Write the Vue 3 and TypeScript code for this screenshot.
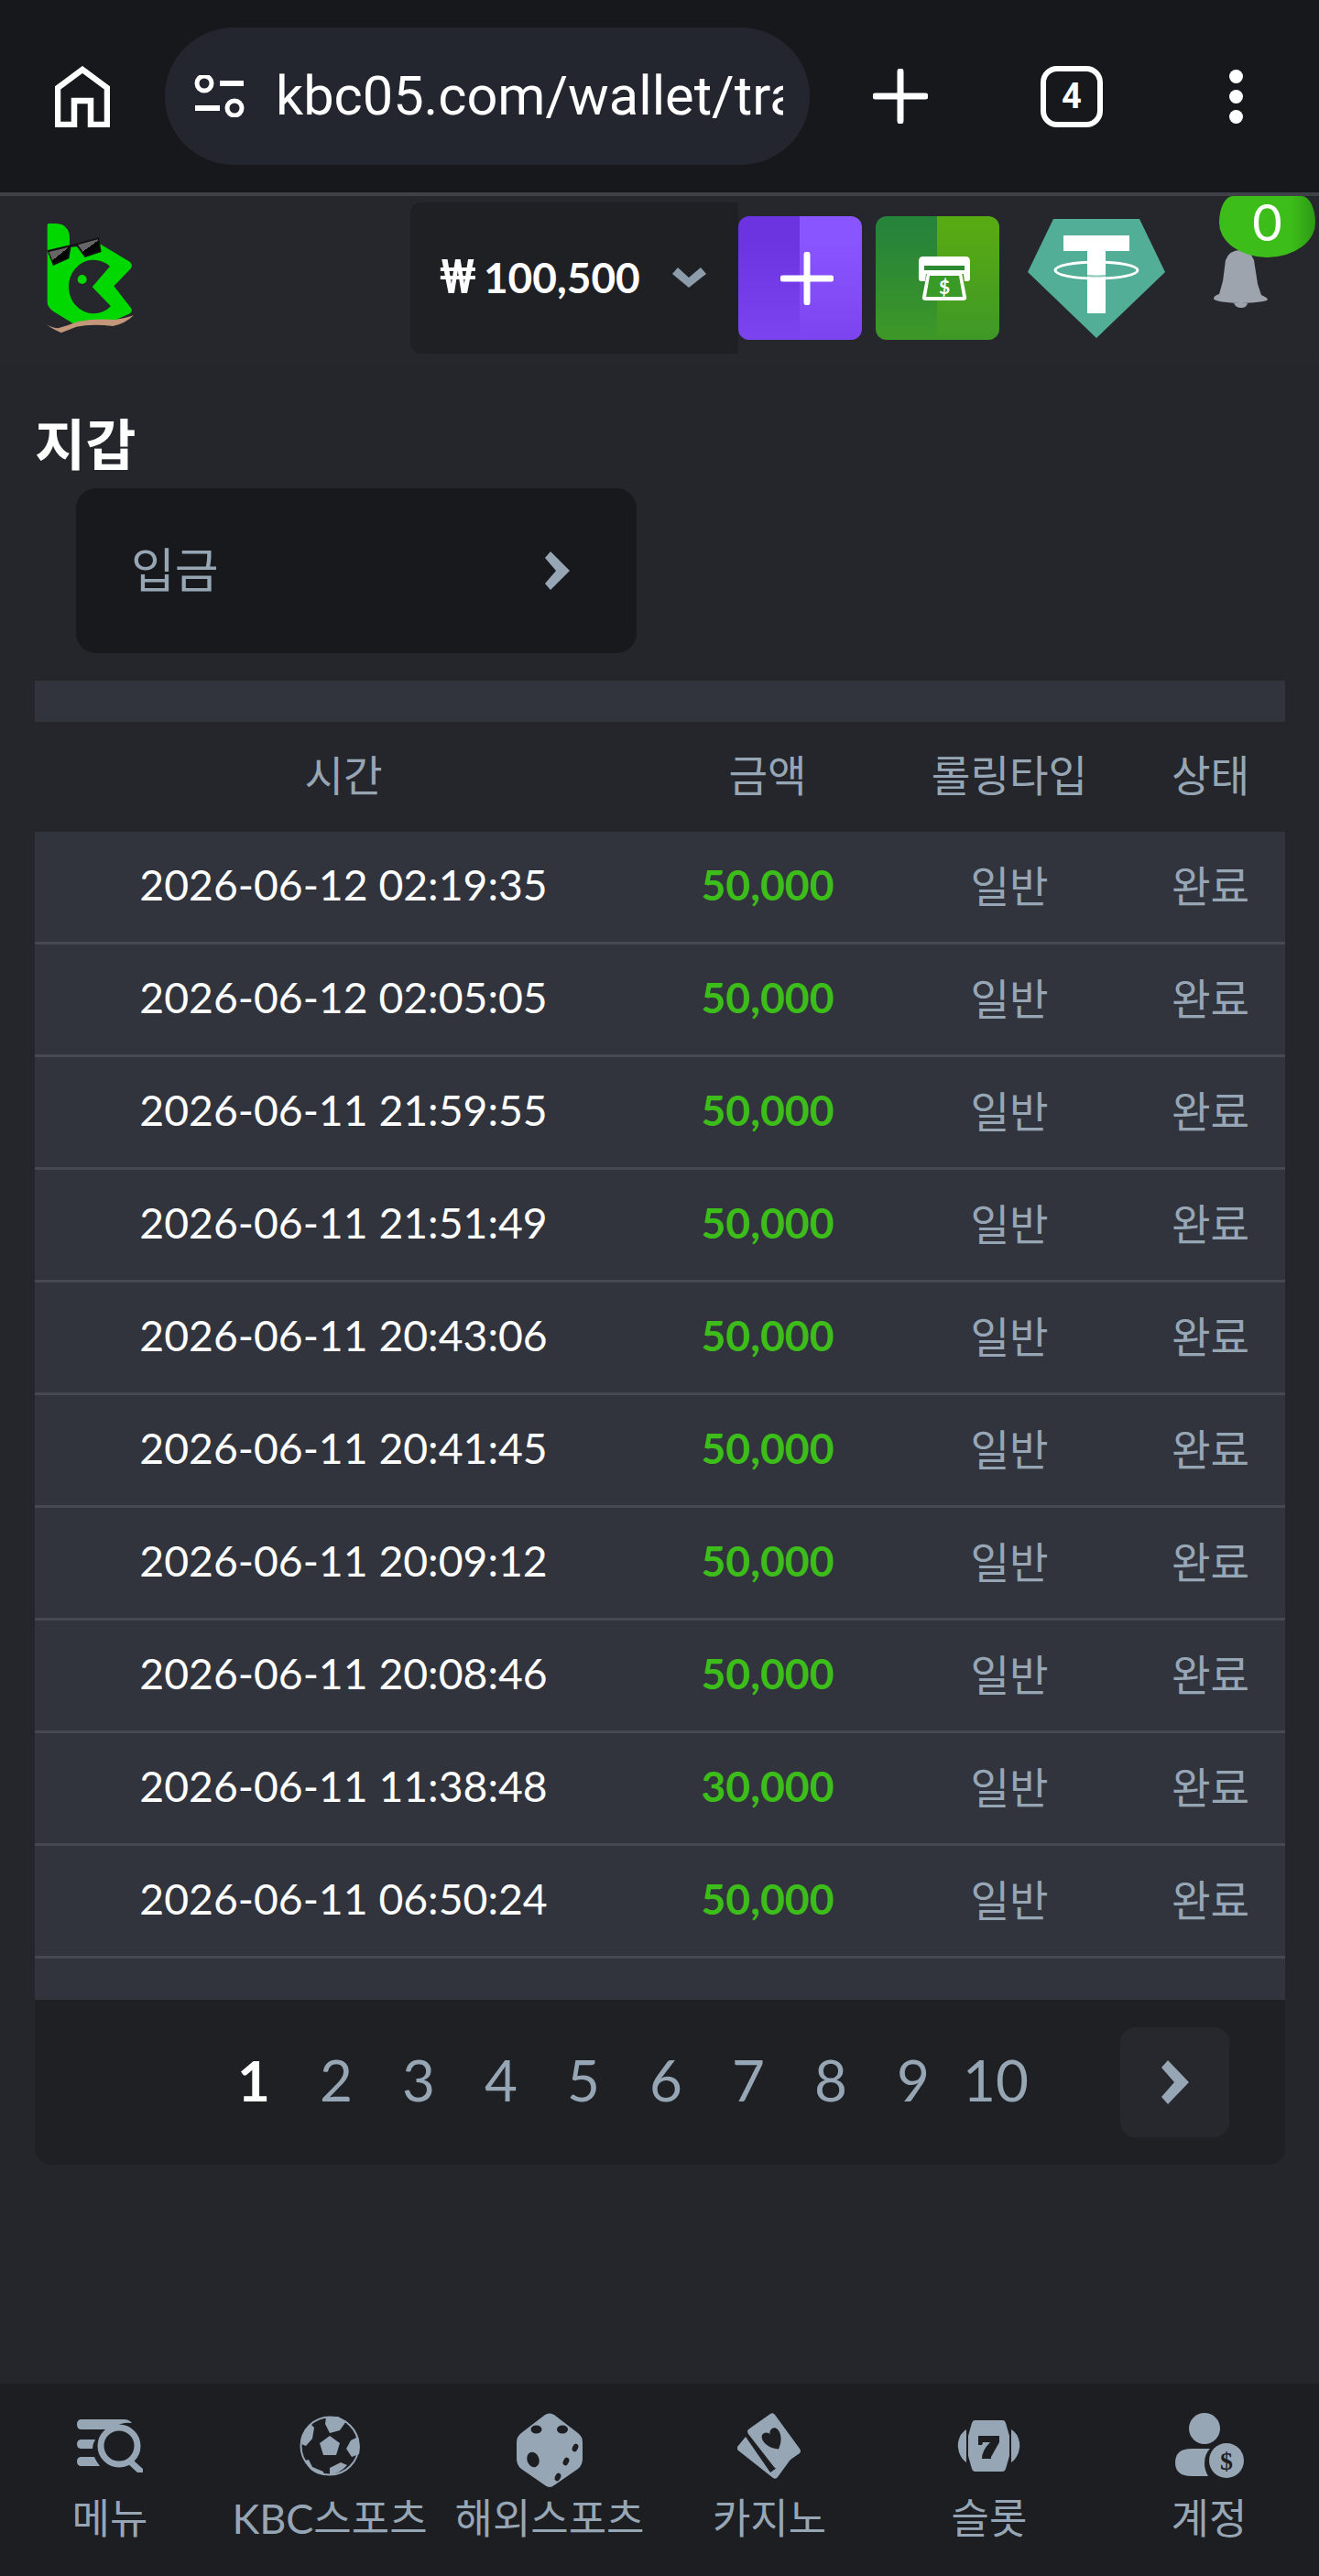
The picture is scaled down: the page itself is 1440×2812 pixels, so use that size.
<script setup lang="ts">
const rows = [
  { time: '2026-06-12 02:19:35', amount: '50,000' },
  { time: '2026-06-12 02:05:05', amount: '50,000' },
  { time: '2026-06-11 21:59:55', amount: '50,000' },
  { time: '2026-06-11 21:51:49', amount: '50,000' },
  { time: '2026-06-11 20:43:06', amount: '50,000' },
  { time: '2026-06-11 20:41:45', amount: '50,000' },
  { time: '2026-06-11 20:09:12', amount: '50,000' },
  { time: '2026-06-11 20:08:46', amount: '50,000' },
  { time: '2026-06-11 11:38:48', amount: '30,000' },
  { time: '2026-06-11 06:50:24', amount: '50,000' },
]
const pages = [1, 2, 3, 4, 5, 6, 7, 8, 9, 10]
</script>

<template>
  <div class="page">
    <div class="browser">
      <svg class="home" viewBox="0 0 60 67" width="60" height="67">
        <path d="M3 64V24L30 4l27 20v40H39V38H21v26Z" fill="none" stroke="#fff" stroke-width="6.500" />
      </svg>
      <div class="url">
        <svg class="tune" viewBox="0 0 56 46" width="56" height="46">
          <circle cx="11" cy="9" r="8" fill="none" stroke="#fff" stroke-width="5" />
          <rect x="28" y="6" width="26" height="6" fill="#fff" />
          <rect x="1" y="33" width="27" height="6" fill="#fff" />
          <circle cx="44" cy="36" r="8" fill="none" stroke="#fff" stroke-width="5" />
        </svg>
        <span class="url-text">kbc05.com/wallet/tra</span>
      </div>
      <svg class="plus" viewBox="0 0 60 60" width="60" height="60">
        <path d="M30 3v54M3 30h54" stroke="#fff" stroke-width="7" stroke-linecap="round" />
      </svg>
      <div class="tabs">4</div>
      <div class="dots"><i></i><i></i><i></i></div>
    </div>

    <header class="top">
      <svg class="logo" viewBox="0 0 390 450" width="130" height="150">
        <defs>
          <linearGradient id="lens" x1="0" y1="0" x2="1" y2="1">
            <stop offset="0.5" stop-color="#666" />
            <stop offset="0.5" stop-color="#050505" />
          </linearGradient>
        </defs>
        <path
          d="M65 62Q65 57 70 57H95Q138 60 138 105V135L240 125 335 182Q347 192 338 205L283 262 340 335Q345 345 335 352L290 372 150 385 85 345Q65 330 65 315Z"
          fill="#00d800"
        />
        <path d="M270 197L212 265 273 328A82 88 0 1 1 270 197Z" fill="#25272c" />
        <circle cx="179" cy="240" r="15" fill="#00d800" />
        <path d="M64 145L140 127 162 122 234 102 242 150 188 168 160 130 143 132 136 172 84 195Z" fill="#111" />
        <path d="M70 150L136 134 130 170 86 187Z" fill="url(#lens)" />
        <path d="M165 127L230 109 236 146 190 161Z" fill="url(#lens)" />
        <path
          d="M62 388Q85 405 110 415 135 405 160 395 210 385 280 393 320 385 348 358 320 368 285 372 220 368 165 378 130 392 100 400 85 400 62 388Z"
          fill="#c3977a"
        />
      </svg>

      <div class="balance">
        <span class="amount-text"><b class="won">₩</b> 100,500</span>
        <svg viewBox="0 0 37 23" width="37" height="23">
          <path d="M0 8l6-7 12 11L31 1l6 7-19 15Z" fill="#8d9cab" />
        </svg>
      </div>

      <button class="action purple">
        <svg viewBox="0 0 58 58" width="58" height="58">
          <path d="M29 3v52M3 29h52" stroke="#fff" stroke-width="7" stroke-linecap="round" />
        </svg>
      </button>

      <button class="action green">
        <svg viewBox="0 0 58 48" width="58" height="48">
          <path d="M6 0h46q5 0 5 5v19q0 3-3 3h-3l-1-8H9l-1 8H4q-3 0-3-3V5q0-5 5-5Z" fill="#fff" />
          <rect x="7" y="10" width="44" height="5" fill="#2d8a30" />
          <path d="M10 18h38l5 26q1 4-4 4H9q-5 0-4-4Z" fill="#fff" />
          <path d="M13 21h32l4 23H9Z" fill="#3a9a27" />
          <text x="29" y="41" class="atm-sign">$</text>
        </svg>
      </button>

      <svg class="tether" viewBox="0 0 150 130" width="150" height="130">
        <path d="M28 0h94l28 58-75 72L0 58Z" fill="#52ae96" />
        <ellipse cx="75" cy="56" rx="45" ry="9" fill="none" stroke="#fff" stroke-width="3" />
        <path d="M39 18h72v17H85v68H65V35H39Z" fill="#fff" />
        <path d="M65 62q10 1 20 0" fill="none" stroke="#8fcbbb" stroke-width="2" />
      </svg>

      <div class="bell-wrap">
        <svg viewBox="0 0 59 63" width="59" height="63">
          <path d="M29 0q11 0 15 11l4 26 4 12q7 3 7 5-2 3-30 4Q1 57 0 53q0-3 6-5l4-14 3-23Q17 0 29 0Z" fill="#9ea4ad" />
          <path d="M22 58h15q-1 5-7 5t-8-5Z" fill="#9ea4ad" />
        </svg>
        <span class="badge">0</span>
      </div>
    </header>

    <main class="content">
      <h1 class="title">지갑</h1>
      <div class="deposit">
        <span>입금</span>
        <svg viewBox="0 0 27 42" width="27" height="42">
          <path d="M0 7l6-7 21 21L6 42l-6-7 12-14Z" fill="#97a6b5" />
        </svg>
      </div>

      <section class="table">
        <div class="table-top"></div>
        <div class="row head">
          <div>시간</div>
          <div>금액</div>
          <div>롤링타입</div>
          <div>상태</div>
        </div>
        <div v-for="row in rows" :key="row.time" class="row item">
          <div class="time">{{ row.time }}</div>
          <div class="amount">{{ row.amount }}</div>
          <div>일반</div>
          <div>완료</div>
        </div>
        <div class="table-end"></div>
      </section>

      <nav class="pager">
        <span v-for="p in pages" :key="p" class="num" :class="{ active: p === 1 }">{{ p }}</span>
        <button class="next">
          <svg viewBox="0 0 30 48" width="30" height="48">
            <path d="M0 8l7-8 23 24L7 48l-7-8 14-16Z" fill="#97a6b5" />
          </svg>
        </button>
      </nav>
    </main>

    <footer class="bottom">
      <div class="tab">
        <div class="icon">
          <svg viewBox="0 0 72 58" width="72" height="58">
            <path d="M5 0h46q6 0 9 4-6-1-12 1-8 2-13 6H5q-5 0-5-5.500T5 0Z" fill="#97a6b5" />
            <path d="M5 22h15q-3 5-3 10H5q-5 0-5-5t5-5Z" fill="#97a6b5" />
            <path d="M5 41h14q2 5 6 10H5q-5 0-5-5t5-5Z" fill="#97a6b5" />
            <circle cx="46" cy="29" r="20" fill="none" stroke="#97a6b5" stroke-width="7" />
            <path d="M58 46l11 10" stroke="#97a6b5" stroke-width="7" stroke-linecap="round" />
          </svg>
        </div>
        <span>메뉴</span>
      </div>
      <div class="tab">
        <div class="icon">
          <svg viewBox="0 0 66 66" width="66" height="66">
            <circle cx="33" cy="33" r="31.500" fill="none" stroke="#97a6b5" stroke-width="2" />
            <g fill="#97a6b5">
              <path d="M33 22l11 8-4 13H26l-4-13Z" />
              <path d="M29 1h13l9 5-7 10-11 3-5-10Z" />
              <path d="M12 9l4 4-2 12-7 8-5-2q1-14 10-22Z" />
              <path d="M56 27l8-4q3 9 1 19l-8 3-6-9Z" />
              <path d="M10 48l4 8 12 5 1 4q-16-2-21-16Z" />
              <path d="M33 57l12-6 7 3q-8 9-19 11Z" />
            </g>
          </svg>
        </div>
        <span>KBC스포츠</span>
      </div>
      <div class="tab">
        <div class="icon">
          <svg class="dice" viewBox="0 0 72 82" width="72" height="82">
            <path
              d="M31 2q5-3 10 0l26 20q5 4 5 10v18q0 7-5 11L41 79q-5 4-10 0L5 61q-5-4-5-11V32q0-6 5-10Z"
              fill="#97a6b5"
            />
            <g fill="#1c1e22">
              <ellipse cx="21.500" cy="18" rx="6" ry="4.500" />
              <ellipse cx="50" cy="18" rx="6" ry="4.500" />
              <ellipse cx="18" cy="51" rx="6.500" ry="8.500" transform="rotate(-20 18 51)" />
              <ellipse cx="64" cy="38" rx="3" ry="4.500" transform="rotate(25 64 38)" />
              <ellipse cx="54" cy="53" rx="3" ry="4.500" transform="rotate(25 54 53)" />
              <ellipse cx="45" cy="70" rx="3" ry="4.500" transform="rotate(25 45 70)" />
            </g>
          </svg>
        </div>
        <span>해외스포츠</span>
      </div>
      <div class="tab">
        <div class="icon">
          <svg viewBox="0 0 70 74" width="70" height="74">
            <path d="M36 2q3-2 5 1l27 37q2 3 0 5L45 61q-3 2-5-1L12 24q-2-3 0-5Z" fill="#97a6b5" />
            <path
              d="M39 42C26 33 27 19 33.500 19 36.500 19 39 21.500 39 24 39 21.500 41.500 19 44.500 19 51 19 52 33 39 42Z"
              fill="#1c1e22"
              transform="rotate(-30 39 30)"
            />
            <path d="M9 27l27 39 24-17-16 22q-2 3-5 1L1 42q-2-2-1-4Z" fill="#97a6b5" />
          </svg>
        </div>
        <span>카지노</span>
      </div>
      <div class="tab">
        <div class="icon">
          <svg viewBox="0 0 70 56" width="70" height="56">
            <path d="M19 0h31q2 0 3 3l4 14v22l-4 14q-1 3-3 3H19q-2 0-3-3l-4-14V17l4-14q1-3 3-3Z" fill="#97a6b5" />
            <path d="M10 10Q3 14 1 24q-1 5 1 11 3 8 8 11Z" fill="#97a6b5" />
            <path d="M59 10q7 4 9 14 1 5-1 11-3 8-8 11Z" fill="#97a6b5" />
            <path d="M23 17h23v7L37 40v2H27q0-9 9-18h-8l-1 3h-4Z" fill="#1c1e22" />
          </svg>
        </div>
        <span>슬롯</span>
      </div>
      <div class="tab">
        <div class="icon">
          <svg viewBox="0 0 75 72" width="75" height="72">
            <ellipse cx="32" cy="17" rx="17" ry="17" fill="#97a6b5" />
            <path d="M18 39h20q-6 6-6 16 0 7 4 14H18q-18 0-18-15t18-15Z" fill="#97a6b5" />
            <circle cx="56" cy="52" r="19" fill="#97a6b5" />
            <text x="56" y="62" class="coin-sign">$</text>
          </svg>
        </div>
        <span>계정</span>
      </div>
    </footer>
  </div>
</template>

<style>
body {
  margin: 0;
  background: #25262b;
}
</style>

<style scoped>
.page {
  width: 1440px;
  height: 2812px;
  display: flex;
  flex-direction: column;
  overflow: hidden;
  background: #25262b;
  font-family: Lato, "Noto Sans CJK KR", sans-serif;
  color: #97a6b5;
}

.browser {
  height: 210px;
  flex: none;
  display: flex;
  align-items: center;
  background: #17181b;
  border-bottom: 4px solid #3f4149;
}

.home {
  margin-left: 60px;
  flex: none;
}

.url {
  width: 704px;
  height: 150px;
  margin-left: 60px;
  flex: none;
  display: flex;
  align-items: center;
  box-sizing: border-box;
  padding: 0 29px 0 32px;
  border-radius: 75px;
  background: #23262f;
}

.tune {
  flex: none;
}

.url-text {
  margin-left: 33px;
  flex: 1;
  min-width: 0;
  overflow: hidden;
  white-space: nowrap;
  font-family: Roboto, sans-serif;
  font-size: 59.500px;
  color: #fff;
}

.plus {
  margin-left: 69px;
  flex: none;
}

.tabs {
  width: 68px;
  height: 67px;
  margin-left: 123px;
  flex: none;
  box-sizing: border-box;
  display: flex;
  align-items: center;
  justify-content: center;
  border: 6px solid #fff;
  border-radius: 18px;
  font-family: Roboto, sans-serif;
  font-size: 38px;
  font-weight: 700;
  color: #fff;
}

.dots {
  margin-left: 138px;
  display: flex;
  flex-direction: column;
  gap: 7px;
}

.dots i {
  display: block;
  width: 15px;
  height: 15px;
  border-radius: 50%;
  background: #fff;
}

.top {
  height: 184px;
  flex: none;
  display: flex;
  align-items: flex-start;
  box-sizing: border-box;
  background: #25272c;
}

.logo {
  margin: 11px 0 0 30px;
  flex: none;
}

.balance {
  width: 358px;
  height: 165px;
  margin: 7px 0 0 288px;
  flex: none;
  box-sizing: border-box;
  display: flex;
  align-items: center;
  padding: 0 0 3px 32px;
  gap: 34px;
  border-radius: 12px 0 0 12px;
  background: #1f2024;
  font-size: 46px;
  font-weight: 700;
  color: #fff;
}

.amount-text {
  width: 220px;
  white-space: nowrap;
}

.won {
  font-family: Roboto, sans-serif;
  font-size: 51px;
  font-weight: 500;
  letter-spacing: -3px;
}

.action {
  width: 135px;
  height: 135px;
  margin-top: 22px;
  flex: none;
  display: flex;
  align-items: center;
  justify-content: center;
  padding: 0;
  border: none;
  border-radius: 12px;
}

.action svg {
  margin-left: 14px;
}

.purple {
  background:
    linear-gradient(180deg, rgba(124, 68, 239, 0) 20%, #7c44ef 100%),
    linear-gradient(90deg, #6c33e0 50%, #8955ff 50%);
}

.green {
  margin-left: 15px;
  background:
    linear-gradient(180deg, rgba(60, 150, 40, 0) 10%, #3e9827 100%),
    linear-gradient(90deg, #26833a 50%, #58aa13 50%);
}

.atm-sign {
  font: 700 21px Lato, sans-serif;
  fill: #fff;
  text-anchor: middle;
}

.coin-sign {
  font: 700 28px "Liberation Serif", serif;
  fill: #1c1e22;
  text-anchor: middle;
}

.tether {
  margin: 25px 0 0 31px;
  flex: none;
}

.bell-wrap {
  position: relative;
  width: 59px;
  height: 63px;
  margin: 59px 0 0 53px;
  flex: none;
}

.badge {
  position: absolute;
  left: 6px;
  top: -59px;
  width: 105px;
  height: 67px;
  box-sizing: border-box;
  padding-bottom: 11px;
  display: flex;
  align-items: center;
  justify-content: center;
  border-radius: 15px 15px 52px 52px / 29px 29px 38px 38px;
  background: linear-gradient(90deg, #3dbd19 75%, #2c9a14);
  font-size: 56px;
  line-height: 56px;
  color: #fff;
}

.content {
  flex: 1;
  padding: 0 37px 0 38px;
  min-height: 0;
}

.title {
  margin: 48px 0 0;
  height: 87px;
  font-size: 60px;
  line-height: 78px;
  font-weight: 700;
  color: #fff;
}

.deposit {
  width: 612px;
  height: 180px;
  margin-left: 45px;
  box-sizing: border-box;
  display: flex;
  align-items: center;
  justify-content: space-between;
  padding: 0 73px 0 60px;
  border-radius: 22px;
  background: #18191c;
  font-size: 52px;
}

.deposit span {
  margin-bottom: 7px;
}

.table {
  margin-top: 30px;
}

.table-top {
  height: 45px;
  background: #31343d;
}

.table-end {
  height: 45px;
  background: #31343d;
}

.row {
  display: grid;
  grid-template-columns: 674px 252px 276px 1fr;
  align-items: center;
  text-align: center;
  font-size: 46.300px;
}

.head {
  height: 120px;
  box-sizing: border-box;
  padding-bottom: 10px;
}

.item {
  height: 123px;
  box-sizing: border-box;
  padding-bottom: 7px;
  border-bottom: 3px solid #464952;
  background: #31343d;
}

.time {
  color: #fff;
}

.amount {
  font-weight: 700;
  color: #3dbd19;
}

.pager {
  height: 180px;
  display: flex;
  align-items: center;
  box-sizing: border-box;
  border-radius: 0 0 18px 18px;
  background: #1e2024;
}

.num {
  width: 90px;
  flex: none;
  margin-bottom: 7px;
  text-align: center;
  font-size: 62px;
}

.num:first-child {
  margin-left: 194px;
}

.num.active {
  color: #fff;
  font-weight: 700;
}

.next {
  width: 119px;
  height: 120px;
  margin-left: 91px;
  flex: none;
  display: flex;
  align-items: center;
  justify-content: center;
  padding: 0;
  border: none;
  border-radius: 16px;
  background: #26282d;
}

.bottom {
  height: 210px;
  flex: none;
  display: flex;
  background: #1c1e22;
}

.tab {
  width: 240px;
  display: flex;
  flex-direction: column;
  align-items: center;
  font-size: 45px;
  line-height: 60px;
  white-space: nowrap;
}

.icon {
  height: 71px;
  margin-top: 32px;
  display: flex;
  align-items: center;
  justify-content: center;
}

.dice {
  align-self: flex-start;
}

.tab span {
  margin-top: 14px;
}
</style>
